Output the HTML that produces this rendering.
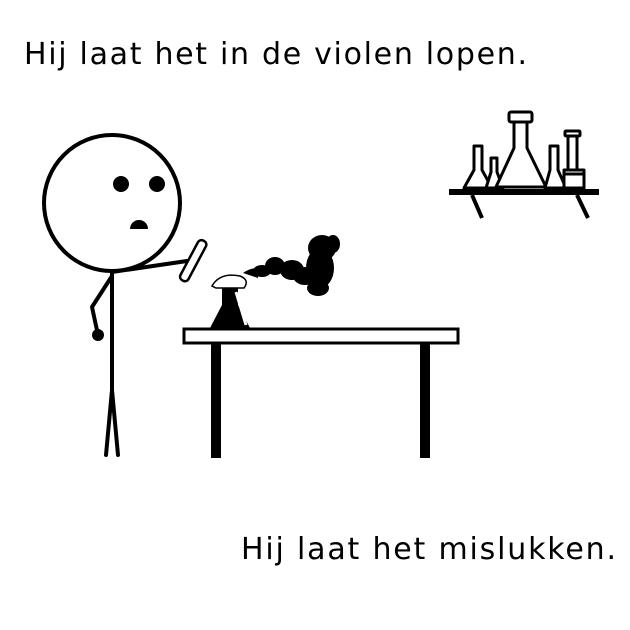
<!DOCTYPE html>
<html><head><style>html,body{margin:0;padding:0;background:#fff}svg{display:block}</style></head>
<body>
<svg width="630" height="630" viewBox="0 0 630 630" xmlns="http://www.w3.org/2000/svg">
<g font-family="DejaVu Sans, Verdana, sans-serif" font-size="30" fill="#000">
<text x="24" y="64" textLength="503" lengthAdjust="spacing">Hij laat het in de violen lopen.</text>
<text x="241" y="559" textLength="375" lengthAdjust="spacing">Hij laat het mislukken.</text>
</g>
<g stroke="#000" stroke-width="4" fill="none" stroke-linecap="round" stroke-linejoin="round">
<circle cx="112" cy="203" r="68"/>
<path d="M112 272 L112 390 L106 455 M112 390 L118 455"/>
<path d="M112 276 L92 307 L98 335"/>
<path d="M112 272 L187 261"/>
</g>
<circle cx="121" cy="184" r="8"/>
<circle cx="157" cy="184" r="8"/>
<path d="M130 229 A9 9 0 0 1 148 229 Z"/>
<circle cx="98" cy="335" r="6"/>
<rect x="189" y="238" width="9" height="45" rx="4" transform="rotate(28 193 260)" fill="#fff" stroke="#000" stroke-width="2.5"/>
<rect x="184" y="329" width="274" height="14" fill="#fff" stroke="#000" stroke-width="3"/>
<rect x="211" y="343" width="10" height="115"/>
<rect x="420" y="343" width="10" height="115"/>
<path d="M222 288 L222 305 L210 328 L250 328 L238 305 L238 288 Z"/>
<path d="M212 286 Q220 272 240 276 Q250 280 244 288 L216 288 Z" fill="#fff" stroke="#000" stroke-width="1.5"/>
<path d="M236 292 L246 325" stroke="#fff" stroke-width="3"/>
<g>
<ellipse cx="262" cy="271" rx="9" ry="6"/>
<ellipse cx="275" cy="266" rx="10" ry="9"/>
<ellipse cx="292" cy="270" rx="12" ry="10"/>
<ellipse cx="305" cy="276" rx="12" ry="9"/>
<ellipse cx="320" cy="268" rx="14" ry="20"/>
<ellipse cx="322" cy="248" rx="14" ry="13"/>
<ellipse cx="333" cy="244" rx="7" ry="9"/>
<ellipse cx="318" cy="288" rx="11" ry="8"/>
<path d="M243 273 Q250 268 258 268 L258 278 Z"/>
</g>
<rect x="449" y="189" width="150" height="6"/>
<path d="M472 195 L482 218 M577 195 L588 218" stroke="#000" stroke-width="4"/>
<g fill="#fff" stroke="#000" stroke-width="3" stroke-linejoin="round">
<path d="M474 146 L482 146 L482 170 L492 188 L464 188 L474 170 Z"/>
<path d="M491 158 L497 158 L497 172 L503 188 L486 188 L491 172 Z"/>
<path d="M514 122 L527 122 L527 148 L546 187 L496 187 L514 148 Z"/>
<rect x="509" y="112" width="23" height="10" rx="2"/>
<path d="M550 146 L558 146 L558 170 L566 188 L545 188 L550 170 Z"/>
<rect x="568" y="136" width="9" height="44" rx="2"/>
<rect x="565" y="131" width="15" height="5" rx="1"/>
<path d="M564 174 L584 174 L584 188 L564 188 Z M564 174 L564 170 L584 170 L584 174"/>
</g>
</svg>
</body></html>
